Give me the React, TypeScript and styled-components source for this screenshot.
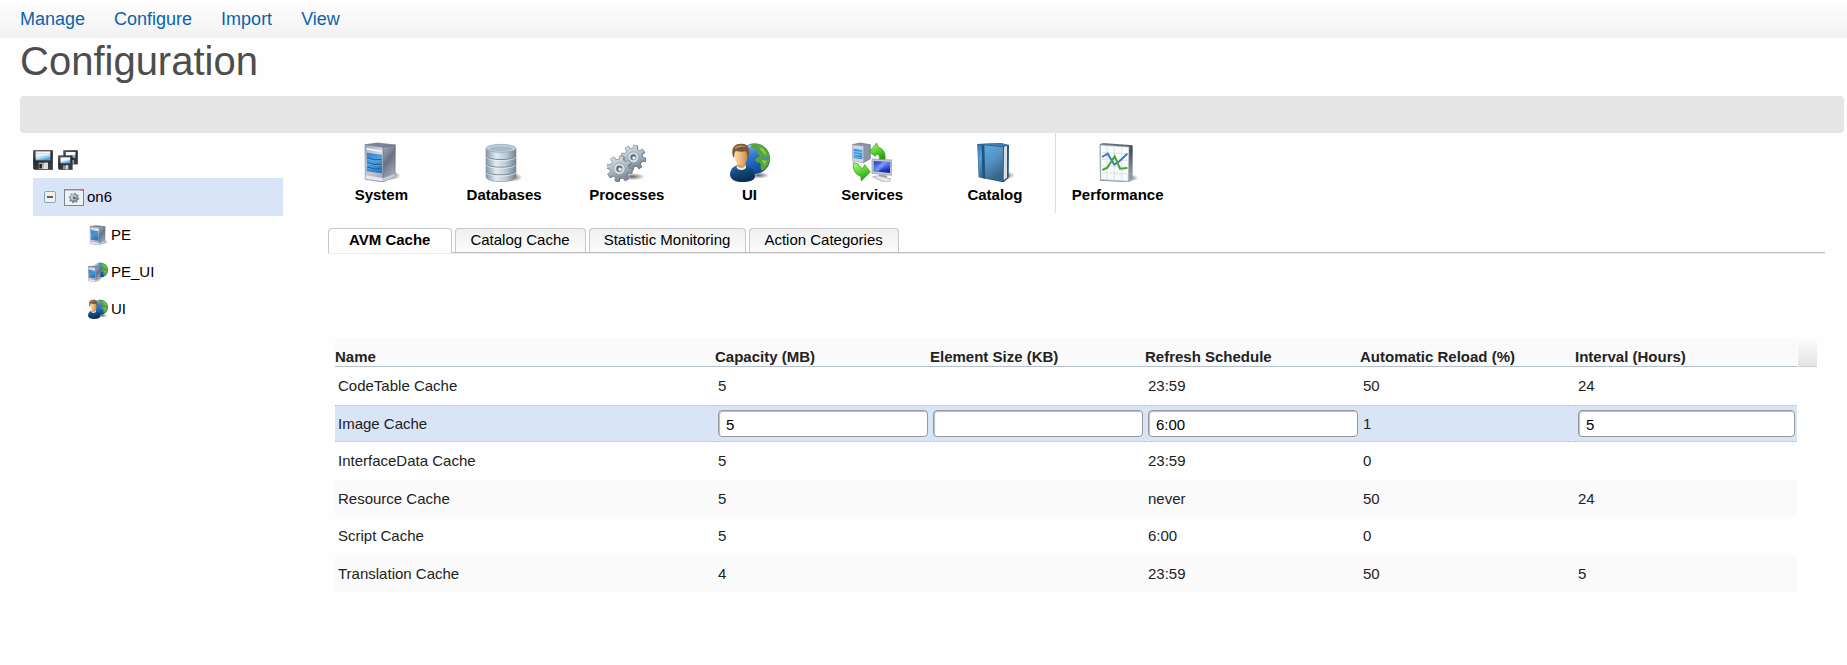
import React from "react";
import styled, { createGlobalStyle } from "styled-components";

const GlobalStyle = createGlobalStyle`
  *, *::before, *::after { box-sizing: border-box; }
  body {
    margin: 0;
    background: #fefefe;
    color: #000;
    font-family: Arial, "Liberation Sans", sans-serif;
    font-size: 15px;
    line-height: 18px;
  }
  button, input { font: inherit; color: inherit; }
`;

/* ---------- page frame ---------- */

const MenuBar = styled.nav`
  display: flex;
  align-items: center;
  gap: 29px;
  height: 38px;
  padding: 0 20px;
  background: linear-gradient(#fefefe, #f2f2f2);
`;

const MenuLink = styled.a`
  color: #0b62ae;
  font-size: 18px;
  line-height: 20px;
  text-decoration: none;
`;

const PageTitle = styled.h1`
  margin: 0 20px 12px;
  color: #4d4d4d;
  font-size: 40px;
  font-weight: normal;
  line-height: 46px;
`;

const Banner = styled.div`
  height: 37px;
  margin: 0 3px 0 20px;
  border-radius: 4px;
  background: #e5e5e5;
`;

const Columns = styled.div`
  display: flex;
  align-items: flex-start;
  gap: 37px;
  padding-left: 33px;
`;

/* ---------- tree ---------- */

const Sidebar = styled.aside`
  flex: 0 0 250px;
  padding-top: 17px;
`;

const SaveBar = styled.div`
  display: flex;
  gap: 5px;
  margin-bottom: 8px;
`;

const IconButton = styled.button`
  display: block;
  padding: 0;
  border: 0;
  background: none;
  cursor: pointer;
`;

const Tree = styled.ul`
  margin: 0;
  padding: 0;
  list-style: none;
`;

const TreeRow = styled.div<{ $selected?: boolean; $level: number }>`
  display: flex;
  align-items: center;
  gap: ${(p) => (p.$selected ? 8 : 4)}px;
  height: ${(p) => (p.$selected ? 38 : 37)}px;
  padding-left: ${(p) => (p.$level ? 55 : 11)}px;
  background: ${(p) => (p.$selected ? "#d9e4f6" : "transparent")};
`;

const TreeLabel = styled.button`
  display: flex;
  align-items: center;
  gap: 3px;
  padding: 0;
  border: 0;
  background: none;
  line-height: 20px;
  cursor: pointer;
`;

/* ---------- toolbar ---------- */

const Main = styled.main`
  flex: 1;
  min-width: 0;
`;

const Toolbar = styled.div`
  display: flex;
  max-width: 859px;
  height: 80px;
`;

const ToolButton = styled.button<{ $divider: boolean }>`
  display: flex;
  flex: 1 1 0;
  flex-direction: column;
  align-items: center;
  gap: 4px;
  min-width: 0;
  padding: 9px 0 0;
  border: 0;
  background: ${(p) => (p.$divider ? "linear-gradient(#dcdcdc, #dcdcdc) right / 1px 100% no-repeat" : "none")};
  font-weight: bold;
  cursor: pointer;
`;

/* ---------- tabs ---------- */

const TabStrip = styled.div`
  display: flex;
  align-items: flex-start;
  gap: 3px;
  height: 26px;
  margin: 15px 22px 0 8px;
  border-bottom: 1px solid #ececec;
  box-shadow: inset 0 -1px #bcbcbc;
`;

const Tab = styled.button<{ $active: boolean }>`
  height: ${(p) => (p.$active ? 25 : 24)}px;
  padding: 0 ${(p) => (p.$active ? 21 : 15)}px ${(p) => (p.$active ? 3 : 2)}px;
  padding-left: ${(p) => (p.$active ? 20 : 14)}px;
  border: 1px solid #c8c8c8;
  border-bottom: 0;
  border-radius: 4px 4px 0 0;
  background: ${(p) => (p.$active ? "#fefefe" : "linear-gradient(#f0f0f0, #fbfbfb)")};
  font-weight: ${(p) => (p.$active ? "bold" : "normal")};
  white-space: nowrap;
  cursor: pointer;
`;

/* ---------- table ---------- */

const TableArea = styled.section`
  display: flex;
  gap: 1px;
  margin: 84px 30px 0 15px;
`;

const CacheTable = styled.table`
  flex: 1;
  width: 100%;
  min-width: 0;
  table-layout: fixed;
  border-collapse: separate;
  border-spacing: 0;
  color: #222;
`;

const Col = styled.col<{ $width?: number }>`
  width: ${(p) => (p.$width ? `${p.$width}px` : "auto")};
`;

const HeadCell = styled.th`
  height: 29px;
  padding: 10px 0 0;
  border-bottom: 1px solid #b4c0ca;
  background: #fafafa;
  text-align: left;
  white-space: nowrap;
`;

const HeadEnd = styled.div`
  flex: 0 0 19px;
  height: 29px;
  border-bottom: 1px solid #ccc;
  background: linear-gradient(#fdfdfd, #e4e4e4);
`;

const Row = styled.tr<{ $selected: boolean }>`
  height: 38px;
  &:nth-child(even) {
    height: 37px;
    background: ${(p) => (p.$selected ? "#d9e4f6" : "#fafafa")};
  }
  td {
    border: 0 dotted #a3bfee;
    border-width: ${(p) => (p.$selected ? "1px 0" : "0")};
  }
`;

const Cell = styled.td`
  padding: 0 2px 0 3px;
`;

const Field = styled.input`
  display: block;
  width: 100%;
  height: 27px;
  padding: 1px 7px 0;
  border: 1px solid #999;
  border-radius: 4px;
  background: #fff;
  box-shadow: inset 1px 1px 1px #bbb;
  color: #000;
`;

const DefsHolder = styled.svg`
  display: block;
  width: 0;
  height: 0;
`;

const Glyph = styled.svg`
  display: block;
  flex: none;
`;

/* ---------- icons ---------- */

const stops: Record<string, string[]> = {
  steelSide: ["#a9afbf", "#6b7286", "#a5abbb"],
  steelFront: ["#9aa5b6", "#d5dbe6", "#a9b1c0"],
  screen: ["#2c7fc9", "#4fa3e2", "#2a78bc"],
  drum: ["#8496a5", "#e3ebf1", "#bccad5", "#71828f"],
  gear: ["#e4e9ee", "#b4bfca", "#7f8c99"],
  globe: ["#8cc4f5", "#2f78cf", "#0f4a99"],
  suit: ["#2c74b0", "#124876", "#0a2e52"],
  skin: ["#fbdcab", "#efb978", "#c98646"],
  leaf: ["#b4f78c", "#5fdc33", "#2f9e14"],
  monitor: ["#2438d6", "#5a78f4", "#1526ad"],
  book: ["#2f6ea6", "#5a9fd4", "#44708f"],
  cover: ["#5fa9dd", "#5593c4", "#3c6585"],
  frame: ["#768592", "#414e59", "#8f9ca6"],
  floppy: ["#5a5a5a", "#2a2a2a", "#3c3c3c"],
  label: ["#d7efff", "#ffffff", "#4aa5e6"],
};

const Defs = () => (
  <DefsHolder aria-hidden="true">
    <defs>
      {Object.entries(stops).map(([id, colors]) => {
        const across = id === "drum" || id === "skin";
        return (
          <linearGradient key={id} id={id} x1="0" y1="0" x2={across ? 1 : 0.4} y2={across ? 0 : 1}>
            {colors.map((c, i) => (
              <stop key={i} offset={i / (colors.length - 1)} stopColor={c} />
            ))}
          </linearGradient>
        );
      })}
      <radialGradient id="shade">
        <stop offset="0" stopColor="#000" stopOpacity="0.6" />
        <stop offset="1" stopColor="#000" stopOpacity="0" />
      </radialGradient>
    </defs>
  </DefsHolder>
);

type IconProps = { size?: number };

const Icon = ({ size = 40, children }: IconProps & { children: React.ReactNode }) => (
  <Glyph width={size} height={size} viewBox="0 0 120 120" aria-hidden="true">
    {children}
  </Glyph>
);

const Tower = () => (
  <g>
    <path d="M12 8 L50 3 L103 9 L66 17Z" fill="#7d8496" stroke="#6b7183" strokeWidth="2" />
    <path d="M66 16 L103 9 L102 104 L65 120Z" fill="url(#steelSide)" stroke="#666d80" strokeWidth="2" />
    <path d="M12 8 L66 16 L65 120 L13 112Z" fill="url(#steelFront)" stroke="#7e879a" strokeWidth="2" />
    <path d="M17 18 L62 26 L62 31 L17 23Z" fill="#f4f6fa" />
    <path d="M17 32 L63 38 L63 94 L17 88Z" fill="url(#screen)" />
    <path d="M19 47 Q38 57 61 53 M19 61 Q38 71 61 67 M19 75 Q38 84 61 81" fill="none" stroke="#155b9c" strokeWidth="3" />
    <path d="M19 50 Q38 60 61 56 M19 64 Q38 74 61 70 M19 78 Q38 87 61 84" fill="none" stroke="#8cc8f2" strokeWidth="1" />
    <path d="M14 100 L65 108 L65 118 L14 110Z" fill="#e6e8ef" />
    <path d="M65 109 L102 95 L102 104 L65 119Z" fill="#c7cad6" />
    <circle cx="57" cy="29" r="2" fill="#eff36b" />
  </g>
);

const SystemIcon = ({ size }: IconProps) => (
  <Icon size={size}>
    <ellipse cx="90" cy="101" rx="29" ry="14" fill="url(#shade)" />
    <Tower />
  </Icon>
);

const DatabaseIcon = () => (
  <Icon>
    <ellipse cx="87" cy="106" rx="28" ry="13" fill="url(#shade)" />
    <path d="M6 19 V104 C6 124 96 124 96 104 V19Z" fill="url(#drum)" stroke="#8797a4" strokeWidth="2" />
    <ellipse cx="51" cy="19" rx="45" ry="12" fill="#c3d1dc" stroke="#8fa0ad" strokeWidth="2" />
    <ellipse cx="51" cy="20" rx="35" ry="7" fill="#a7bac9" />
    {[43, 66, 89].map((y) => (
      <g key={y} fill="none">
        <path d={`M6 ${y} C14 ${y + 13} 88 ${y + 13} 96 ${y}`} stroke="#768895" strokeWidth="3" />
        <path d={`M7 ${y + 3} C15 ${y + 16} 87 ${y + 16} 95 ${y + 3}`} stroke="#f5f9fb" strokeWidth="2" />
      </g>
    ))}
  </Icon>
);

const gearPath = (cx: number, cy: number, outer: number, inner: number, teeth: number, turn: number) => {
  const points: string[] = [];
  for (let i = 0; i < teeth; i++) {
    const shape: [number, number][] = [[-0.3, inner], [-0.2, outer], [0.2, outer], [0.3, inner]];
    shape.forEach(([step, r]) => {
      const a = ((i + step) / teeth) * Math.PI * 2 + turn;
      points.push(`${(cx + Math.cos(a) * r).toFixed(1)} ${(cy + Math.sin(a) * r).toFixed(1)}`);
    });
  }
  return `M${points.join("L")}Z`;
};

const Gear = ({ cx, cy, r }: { cx: number; cy: number; r: number }) => (
  <g>
    <path d={gearPath(cx + 2, cy + 2, r, r * 0.74, 8, 0.2)} fill="#5f6d7a" />
    <path d={gearPath(cx, cy, r, r * 0.74, 8, 0.2)} fill="url(#gear)" stroke="#778592" strokeWidth="2" strokeLinejoin="round" />
    <circle cx={cx} cy={cy} r={r * 0.44} fill="#d9e0e6" stroke="#8795a2" strokeWidth="2" />
    <circle cx={cx} cy={cy} r={r * 0.24} fill="#5b6977" />
    <circle cx={cx + 2} cy={cy + 2} r={r * 0.14} fill="#eef1f4" />
  </g>
);

const ProcessesIcon = () => (
  <Icon>
    <ellipse cx="76" cy="104" rx="38" ry="11" fill="url(#shade)" />
    <Gear cx={79} cy={46} r={37} />
    <Gear cx={37} cy={80} r={39} />
  </Icon>
);

const Globe = ({ cx, cy, r }: { cx: number; cy: number; r: number }) => (
  <g transform={`translate(${cx} ${cy}) scale(${r / 46})`}>
    <circle r="46" fill="url(#globe)" />
    <path
      d="M-14 -43 C0 -49 24 -42 35 -30 C46 -16 47 2 42 14 C38 26 30 34 22 36 C14 30 20 20 17 14 C10 10 2 12 2 2 C6 -4 14 -4 16 -10 C10 -14 4 -14 8 -22 C14 -28 4 -32 -2 -30 C-10 -32 -10 -38 -14 -43Z"
      fill="#5aa436"
    />
    <path d="M12 -36 C24 -34 34 -22 36 -10 C28 -14 20 -24 12 -36Z M22 4 L36 6 L30 20Z" fill="#8bca58" />
    <path d="M20 -4 Q28 2 38 -2" fill="none" stroke="#3b86d8" strokeWidth="5" />
    <path d="M-38 -16 C-30 -34 -18 -40 -8 -40 C-20 -30 -28 -20 -30 -4Z" fill="#b8dcfb" opacity="0.7" />
  </g>
);

const UserIcon = ({ size }: IconProps) => (
  <Icon size={size}>
    <ellipse cx="86" cy="100" rx="32" ry="10" fill="url(#shade)" />
    <Globe cx={74} cy={50} r={46} />
    <path d="M0 99 C0 82 10 73 22 70 L46 70 C64 74 74 84 75 104 C74 114 58 120 38 120 C18 120 2 115 0 99Z" fill="url(#suit)" />
    <path d="M21 68 L47 68 L48 77 C42 86 26 86 20 77Z" fill="#f2f2f0" />
    <path d="M22 60 H46 V72 C40 80 28 79 22 72Z" fill="#d99a5c" />
    <path d="M12 30 C12 14 52 14 53 32 C54 52 46 70 33 70 C19 70 12 50 12 30Z" fill="url(#skin)" />
    <path d="M8 41 C3 14 16 5 33 5 C52 4 62 16 56 43 L52 49 C52 36 50 30 46 28 C34 32 24 26 17 27 C13 31 13 37 12 48Z" fill="#76583a" />
    <path d="M15 16 C24 7 40 8 49 16 C40 13 28 13 15 22Z" fill="#b7935f" />
  </Icon>
);

const ServerUiIcon = ({ size }: IconProps) => (
  <Icon size={size}>
    <Globe cx={75} cy={48} r={45} />
    <g transform="translate(-10 21) scale(0.82)">
      <Tower />
    </g>
  </Icon>
);

const ServicesIcon = () => (
  <Icon>
    <path d="M1 8 L24 3 L55 8 L55 50 L34 62 L1 56Z" fill="#8d94a6" stroke="#666e80" strokeWidth="2" />
    <path d="M1 9 L34 13 L34 62 L1 56Z" fill="#d0d6e2" />
    <path d="M5 20 L31 24 L31 52 L5 48Z" fill="url(#screen)" />
    <path d="M6 28 L30 32 M6 36 L30 40 M6 44 L30 48" stroke="#a3d6f6" strokeWidth="2" />
    <path d="M52 30 L74 3 L79 16 C94 20 102 34 99 54 L82 54 C84 44 82 38 74 36 L70 43Z" fill="url(#leaf)" stroke="#2d9416" strokeWidth="2" />
    <path d="M4 62 C2 84 10 98 26 102 L28 117 L55 90 L38 68 L33 79 C26 78 20 72 19 66Z" fill="url(#leaf)" stroke="#2d9416" strokeWidth="2" />
    <path d="M60 51 L120 54 L119 100 L60 94Z" fill="#c3c7cf" stroke="#8c929c" strokeWidth="2" />
    <path d="M65 57 L115 60 L114 93 L65 88Z" fill="url(#monitor)" />
    <path d="M65 84 L92 59 L107 60 L78 89Z" fill="#94a9fb" opacity="0.6" />
    <path d="M80 97 L106 101 L104 108 L82 104Z" fill="#9a9fa8" />
    <path d="M62 105 L80 101 L117 111 L110 120 L96 120Z" fill="#e3e5e9" stroke="#9a9fa8" strokeWidth="2" />
  </Icon>
);

const CatalogIcon = () => (
  <Icon>
    <ellipse cx="92" cy="100" rx="27" ry="12" fill="url(#shade)" />
    <path d="M7 6 L78 3 L102 9 L101 108 L85 121 L11 106Z" fill="#1f5685" />
    <path d="M87 15 L96 11 L96 107 L86 114Z" fill="#eef0f2" />
    <path d="M90 14 V110 M93 13 V108" stroke="#9aa6b1" strokeWidth="1" />
    <path d="M8 7 L20 9 L24 109 L12 104Z" fill="url(#book)" />
    <path d="M20 9 L28 10 L31 110 L23 109Z" fill="#1c5587" />
    <path d="M28 10 L84 16 L83 117 L31 109Z" fill="url(#cover)" />
    <path d="M12 6 L78 4 L98 9 L86 14Z" fill="#3a7db3" />
  </Icon>
);

const PerformanceIcon = () => (
  <Icon>
    <ellipse cx="94" cy="108" rx="27" ry="11" fill="url(#shade)" />
    <path d="M5 6 L16 3 L104 10 L104 112 L92 121 L6 116Z" fill="url(#frame)" />
    <path d="M7 9 L93 15 L91 118 L8 113Z" fill="#f8fafb" stroke="#a5afb7" strokeWidth="2" />
    <path d="M27 11 V114 M49 13 V116 M71 14 V117 M8 31 L92 36 M8 52 L92 56 M8 72 L92 76 M8 92 L92 96" stroke="#d2d9de" strokeWidth="2" />
    <path d="M12 45 L29 35 L49 68 L64 58 L88 35" fill="none" stroke="#3b79c4" strokeWidth="6" />
    <path d="M13 84 L28 77 L50 43 L66 80 L88 78" fill="none" stroke="#4aa52d" strokeWidth="6" />
  </Icon>
);

const Floppy = () => (
  <g>
    <path d="M3 2 H116 L119 8 V118 H10 L1 109 V6Z" fill="url(#floppy)" stroke="#222" strokeWidth="2" />
    <path d="M16 8 H104 V62 H16Z" fill="url(#label)" />
    <path d="M16 22 H104 M16 36 H104" stroke="#a9cfe8" strokeWidth="4" />
    <path d="M34 76 H90 V114 H34Z" fill="#a9a9a9" />
    <path d="M68 76 H90 V114 H60Z" fill="#dedede" />
    <path d="M38 84 H53 V110 H38Z" fill="#1f1f1f" />
  </g>
);

const SmallFloppy = () => (
  <g>
    <path d="M3 2 H116 L119 8 V118 H10 L1 109 V6Z" fill="url(#floppy)" stroke="#222" strokeWidth="2" />
    <path d="M20 16 H100 V66 H20Z" fill="url(#label)" />
    <path d="M40 82 H84 V114 H40Z" fill="#8f8f8f" />
    <path d="M66 82 H84 V114 H62Z" fill="#d4d4d4" />
  </g>
);

const SaveIcon = () => (
  <Icon size={20}>
    <Floppy />
  </Icon>
);

const SaveAllIcon = () => (
  <Icon size={20}>
    <g transform="translate(32 0) scale(0.73)">
      <SmallFloppy />
    </g>
    <g transform="translate(0 32) scale(0.73)">
      <SmallFloppy />
    </g>
  </Icon>
);

const CollapseIcon = () => (
  <Glyph width="12" height="12" viewBox="0 0 12 12" aria-hidden="true">
    <rect x="0.5" y="0.5" width="11" height="11" rx="1.5" fill="#f3f0e6" stroke="#7fa9c8" />
    <path d="M3 6 H9" stroke="#222" strokeWidth="1.4" />
  </Glyph>
);

const NodeIcon = () => (
  <Glyph width="20" height="17" viewBox="0 0 60 51" aria-hidden="true">
    <rect x="1.5" y="1.5" width="57" height="48" fill="#eef2f5" stroke="#7b858f" strokeWidth="3" />
    <path d="M3 3 H57" stroke="#8d97a2" strokeWidth="3" />
    <path d="M48 3 H57" stroke="#c65a4a" strokeWidth="3" />
    <path d={gearPath(30, 27, 16, 13, 8, 0.2)} fill="#7f8b98" />
    <circle cx="28" cy="25" r="9" fill="#b9c5d0" />
    <circle cx="31" cy="27" r="4" fill="#4f5c69" />
  </Glyph>
);

/* ---------- data ---------- */

const menu = ["Manage", "Configure", "Import", "View"];

const tools = [
  { label: "System", icon: <SystemIcon /> },
  { label: "Databases", icon: <DatabaseIcon /> },
  { label: "Processes", icon: <ProcessesIcon /> },
  { label: "UI", icon: <UserIcon /> },
  { label: "Services", icon: <ServicesIcon /> },
  { label: "Catalog", icon: <CatalogIcon />, divider: true },
  { label: "Performance", icon: <PerformanceIcon /> },
];

const nodes = [
  { label: "PE", icon: <SystemIcon size={20} /> },
  { label: "PE_UI", icon: <ServerUiIcon size={20} /> },
  { label: "UI", icon: <UserIcon size={20} /> },
];

const tabs = ["AVM Cache", "Catalog Cache", "Statistic Monitoring", "Action Categories"];

const headings = ["Name", "Capacity (MB)", "Element Size (KB)", "Refresh Schedule", "Automatic Reload (%)", "Interval (Hours)"];

const editableColumns = [1, 2, 3, 5];

const rows = [
  ["CodeTable Cache", "5", "", "23:59", "50", "24"],
  ["Image Cache", "5", "", "6:00", "1", "5"],
  ["InterfaceData Cache", "5", "", "23:59", "0", ""],
  ["Resource Cache", "5", "", "never", "50", "24"],
  ["Script Cache", "5", "", "6:00", "0", ""],
  ["Translation Cache", "4", "", "23:59", "50", "5"],
];

export default function App() {
  const [activeTab, setActiveTab] = React.useState(0);
  const [selectedRow, setSelectedRow] = React.useState(1);

  return (
    <>
      <GlobalStyle />
      <MenuBar>
        {menu.map((item) => (
          <MenuLink key={item} href="#">{item}</MenuLink>
        ))}
      </MenuBar>
      <PageTitle>Configuration</PageTitle>
      <Banner />
      <Columns>
        <Sidebar>
          <SaveBar>
            <IconButton aria-label="Save"><SaveIcon /></IconButton>
            <IconButton aria-label="Save all"><SaveAllIcon /></IconButton>
          </SaveBar>
          <Tree>
            <li>
              <TreeRow $selected $level={0}>
                <IconButton aria-label="Collapse on6"><CollapseIcon /></IconButton>
                <TreeLabel><NodeIcon />on6</TreeLabel>
              </TreeRow>
              <Tree>
                {nodes.map((node) => (
                  <li key={node.label}>
                    <TreeRow $level={1}>
                      <TreeLabel>{node.icon}{node.label}</TreeLabel>
                    </TreeRow>
                  </li>
                ))}
              </Tree>
            </li>
          </Tree>
        </Sidebar>
        <Main>
          <Toolbar>
            {tools.map((tool) => (
              <ToolButton key={tool.label} $divider={Boolean(tool.divider)}>
                {tool.icon}
                {tool.label}
              </ToolButton>
            ))}
          </Toolbar>
          <TabStrip role="tablist">
            {tabs.map((tab, i) => (
              <Tab key={tab} role="tab" aria-selected={i === activeTab} $active={i === activeTab} onClick={() => setActiveTab(i)}>
                {tab}
              </Tab>
            ))}
          </TabStrip>
          <TableArea>
            <CacheTable>
              <colgroup>
                <Col />
                <Col $width={215} />
                <Col $width={215} />
                <Col $width={215} />
                <Col $width={215} />
                <Col $width={222} />
              </colgroup>
              <thead>
                <tr>
                  {headings.map((h) => (
                    <HeadCell key={h} scope="col">{h}</HeadCell>
                  ))}
                </tr>
              </thead>
              <tbody>
                {rows.map((row, r) => (
                  <Row key={row[0]} $selected={r === selectedRow} onClick={() => setSelectedRow(r)}>
                    {row.map((value, c) => (
                      <Cell key={c}>
                        {r === selectedRow && editableColumns.includes(c) ? (
                          <Field type="text" aria-label={headings[c]} defaultValue={value} />
                        ) : (
                          value
                        )}
                      </Cell>
                    ))}
                  </Row>
                ))}
              </tbody>
            </CacheTable>
            <HeadEnd />
          </TableArea>
        </Main>
      </Columns>
      <Defs />
    </>
  );
}
